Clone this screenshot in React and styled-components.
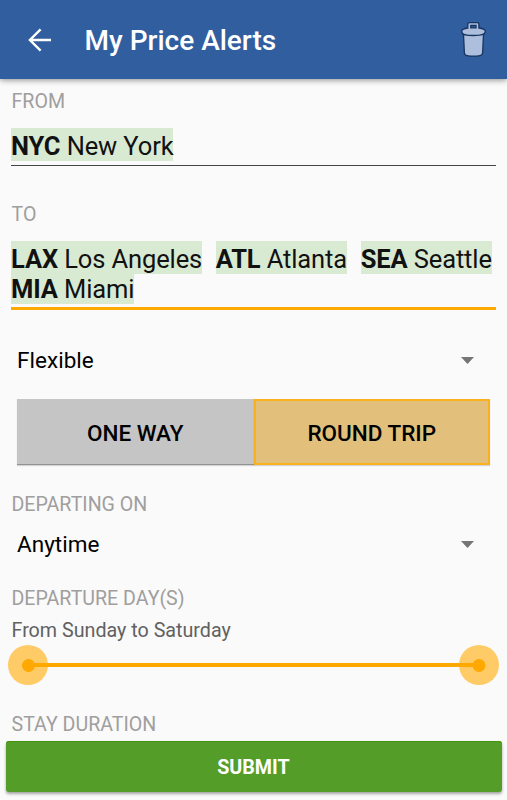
import React from "react";
import styled, { createGlobalStyle } from "styled-components";

const GlobalStyle = createGlobalStyle`
  * {
    box-sizing: border-box;
  }
  body {
    margin: 0;
    background-color: #fafafa;
    font-family: Roboto, "Liberation Sans", sans-serif;
  }
  button {
    font-family: inherit;
    padding: 0;
    border: none;
    background: none;
  }
`;

const Screen = styled.div`
  display: flex;
  flex-direction: column;
  width: 507px;
  height: 800px;
  overflow: hidden;
  background-color: #fafafa;
`;
const Header = styled.header`
  display: flex;
  align-items: center;
  flex: none;
  height: 79px;
  padding: 0 20px 0 28px;
  background-color: #305e9f;
  box-shadow: 0 1px 6px rgba(0, 0, 0, 0.45);
`;
const IconButton = styled.button`
  display: flex;
`;
const Title = styled.h1`
  flex: 1;
  margin: 2px 0 0 32.5px;
  color: #fff;
  font-size: 28px;
  font-weight: 500;
  line-height: 34px;
`;
const Form = styled.main`
  display: flex;
  flex-direction: column;
  flex: 1;
  padding: 11px 11px 0;
`;
const Label = styled.div`
  height: 24px;
  margin-top: ${({ $top }) => $top || 0}px;
  padding-left: 0.5px;
  color: #a09e9e;
  font-size: 19.6px;
  line-height: 24px;
`;
const Field = styled.div`
  margin-top: 17px;
  padding-bottom: ${({ $active }) => ($active ? 3 : 4)}px;
  border-bottom: ${({ $active }) =>
    $active ? "3px solid #ffa800" : "1px solid #444446"};
  color: #111;
  font-size: 25.5px;
  letter-spacing: -0.12px;
  line-height: 30px;
`;
const Chip = styled.span`
  display: inline-block;
  height: 33px;
  margin: -3px 13.6px 0 0;
  padding-top: 3px;
  background-color: #d9ead3;
  vertical-align: top;
  white-space: nowrap;
  &:last-child {
    margin-right: 0;
  }
`;
const ChipRow = styled.div`
  display: flex;
  height: 30px;
`;
const Select = styled.div`
  display: flex;
  align-items: center;
  justify-content: space-between;
  height: 28px;
  margin-top: ${({ $top }) => $top}px;
  padding: 0 22px 0 6px;
  color: #000;
  font-size: 22.5px;
  letter-spacing: 0.04px;
  line-height: 28px;
`;
const Toggle = styled.div`
  display: grid;
  grid-template-columns: 236.5px 236.5px;
  height: 67px;
  margin: 24px 6px 0;
  padding-top: 1px;
`;
const ToggleOption = styled.button`
  padding-top: ${({ $selected }) => ($selected ? 1 : 2)}px;
  color: #000;
  font-size: 22.5px;
  font-weight: 500;
  background-color: ${({ $selected }) => ($selected ? "#e2c07c" : "#c5c5c5")};
  border: ${({ $selected }) => ($selected ? "2px solid #fbb01e" : "none")};
  border-bottom: ${({ $selected }) =>
    $selected ? "2px solid #fbb01e" : "1px solid #929292"};
  box-shadow: 0 1px 1px rgba(0, 0, 0, 0.15);
`;
const Range = styled.div`
  height: 22px;
  margin-top: 9px;
  padding-left: 0.5px;
  color: #616161;
  font-size: 19.7px;
  line-height: 22px;
`;
const Slider = styled.div`
  display: flex;
  align-items: center;
  height: 40px;
  margin: 3px -3px 0;
`;
const Thumb = styled.div`
  display: flex;
  align-items: center;
  justify-content: ${({ $end }) => ($end ? "flex-start" : "flex-end")};
  flex: none;
  width: 40px;
  height: 40px;
  border-radius: 50%;
  background-color: #ffcb66;
`;
const Track = styled.div`
  flex: 1;
  height: 4px;
  background-color: #ffa800;
`;
const ThumbCore = styled.div`
  width: 26.5px;
  height: 13px;
  background: ${({ $end }) =>
    `radial-gradient(circle at ${$end ? "20px" : "6.5px"} 6.5px, #ffa800 6px, transparent 6.8px),
    linear-gradient(#ffa800, #ffa800) ${$end ? "0" : "6.5px"} 4.5px / 20px 4px no-repeat`};
`;
const Submit = styled.button`
  flex: none;
  height: 51px;
  margin: 0 5px 8px 6px;
  padding: 1px 1px 0 0;
  border-radius: 3px;
  background-color: #549d28;
  box-shadow: 0 2px 3px rgba(0, 0, 0, 0.35), inset 0 1px 0 #439410;
  color: #fff;
  font-size: 19.7px;
  font-weight: 700;
`;

const BackIcon = () => (
  <svg width="24" height="24" viewBox="0 0 24 24" fill="none" stroke="#fff">
    <path d="M23 12H2M12.6 1.3L1.9 12l10.7 10.7" strokeWidth="2.4" />
  </svg>
);

const TrashIcon = () => (
  <svg width="27" height="36" viewBox="0 0 27 36">
    <g fill="#adbfdc" stroke="#17355f" strokeWidth="1.3">
      <path d="M3.500 12.500h20l-.9 18.500c-.1 1.900-1.600 2.600-3.600 2.800-3.600.4-7.400.4-11 0-2-.2-3.500-.9-3.600-2.800z" />
      <path d="M1.700 9.500c0-2 1.500-3 6.100-3.500V2.300c0-1.300.5-1.600 1.700-1.600h7.700c1.200 0 1.700.3 1.700 1.600V6c4.900.5 6.400 1.500 6.400 3.500 0 2.800-4 4-11.800 4S1.700 12.300 1.700 9.500z" />
      <path d="M10.800 3.500h5.200v2.300h-5.200z" fill="#305e9f" />
    </g>
  </svg>
);

const Caret = () => (
  <svg width="13" height="7" viewBox="0 0 13 7">
    <path d="M0 0h13L6.500 7z" fill="#757575" />
  </svg>
);

const destinations = [
  [
    { code: "LAX", city: "Los Angeles" },
    { code: "ATL", city: "Atlanta" },
    { code: "SEA", city: "Seattle" },
  ],
  [{ code: "MIA", city: "Miami" }],
];

const Airport = ({ code, city }) => (
  <Chip>
    <b>{code}</b> {city}
  </Chip>
);

const App = () => {
  return (
    <>
      <GlobalStyle />
      <Screen>
        <Header>
          <IconButton aria-label="Back">
            <BackIcon />
          </IconButton>
          <Title>My Price Alerts</Title>
          <IconButton aria-label="Delete">
            <TrashIcon />
          </IconButton>
        </Header>
        <Form>
          <Label>FROM</Label>
          <Field>
            <ChipRow>
              <Airport code="NYC" city="New York" />
            </ChipRow>
          </Field>
          <Label $top={37}>TO</Label>
          <Field $active>
            {destinations.map((row) => (
              <ChipRow key={row[0].code}>
                {row.map((airport) => (
                  <Airport key={airport.code} {...airport} />
                ))}
              </ChipRow>
            ))}
          </Field>
          <Select $top={36}>
            Flexible
            <Caret />
          </Select>
          <Toggle>
            <ToggleOption>ONE WAY</ToggleOption>
            <ToggleOption $selected>ROUND TRIP</ToggleOption>
          </Toggle>
          <Label $top={28}>DEPARTING ON</Label>
          <Select $top={13}>
            Anytime
            <Caret />
          </Select>
          <Label $top={29}>DEPARTURE DAY(S)</Label>
          <Range>From Sunday to Saturday</Range>
          <Slider>
            <Thumb>
              <ThumbCore />
            </Thumb>
            <Track />
            <Thumb $end>
              <ThumbCore $end />
            </Thumb>
          </Slider>
          <Label $top={28}>STAY DURATION</Label>
        </Form>
        <Submit>SUBMIT</Submit>
      </Screen>
    </>
  );
};

export default App;
